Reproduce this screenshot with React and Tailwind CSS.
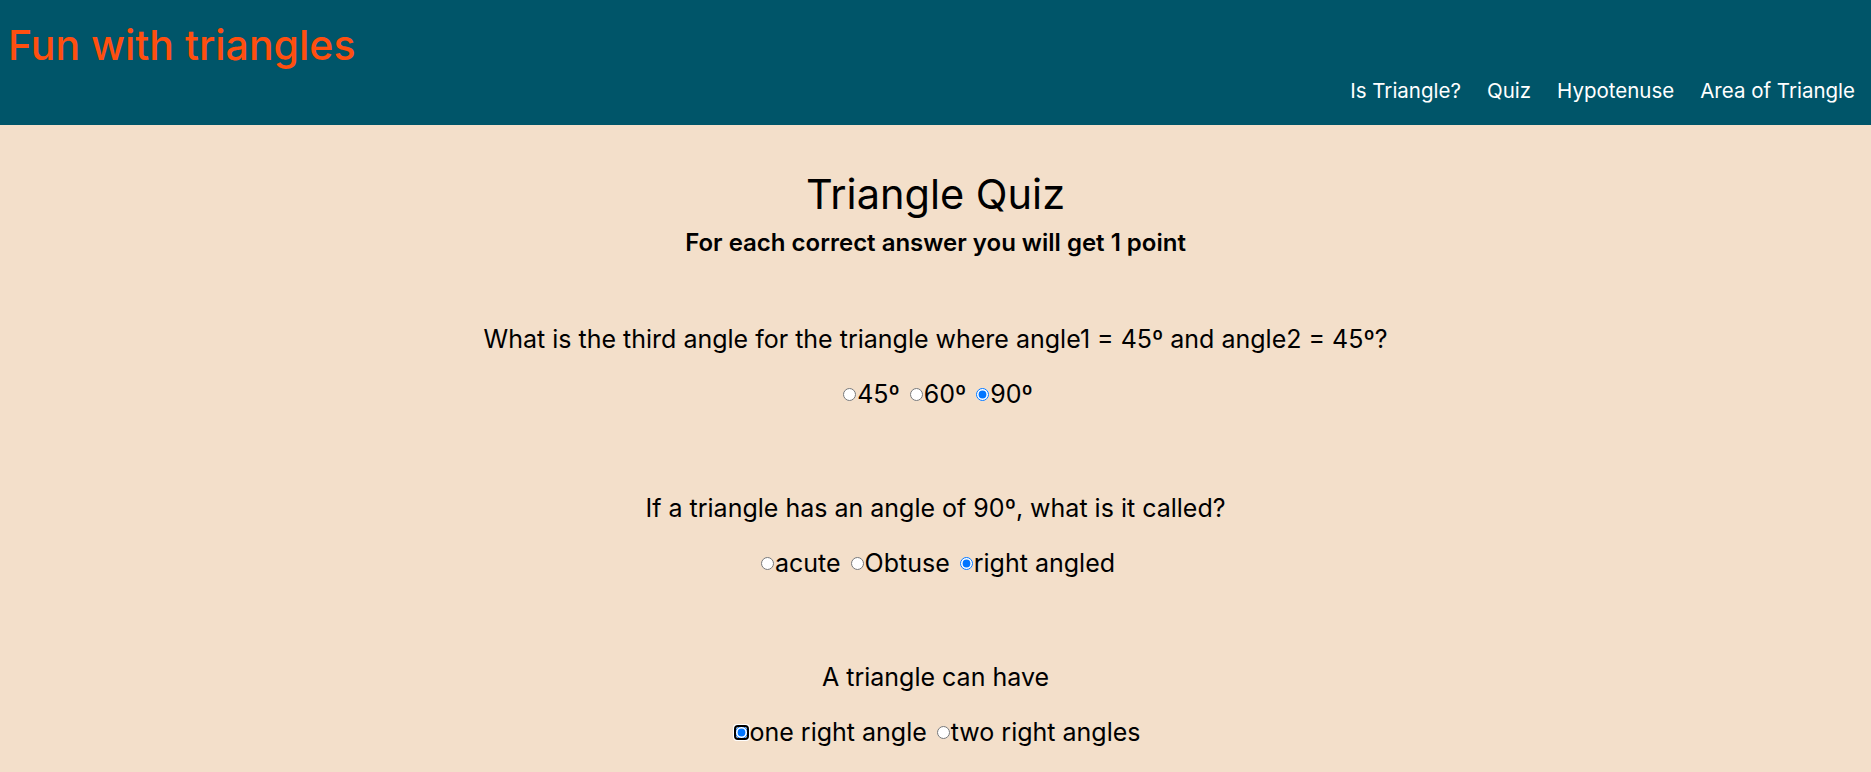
import { useState } from 'react';

const QUESTIONS = [
  {
    name: 'q1',
    text: 'What is the third angle for the triangle where angle1 = 45º and angle2 = 45º?',
    options: ['45º', '60º', '90º'],
    picked: 2,
  },
  {
    name: 'q2',
    text: 'If a triangle has an angle of 90º, what is it called?',
    options: ['acute', 'Obtuse', 'right angled'],
    picked: 2,
  },
  {
    name: 'q3',
    text: 'A triangle can have',
    options: ['one right angle', 'two right angles'],
    picked: 0,
    focused: 0,
  },
];

const Question = ({ q, first, answer, onPick }) => (
  <div className={first ? 'mt-[67px]' : 'mt-[84px]'}>
    <p className="text-[25px] leading-[30px]">{q.text}</p>
    <div className="mt-[25px] text-[25px] leading-[30px]">
      {q.options.map((opt, i) => (
        <label key={opt} className="mr-[5px] last:mr-0">
          <input
            type="radio"
            name={q.name}
            checked={answer === i}
            onChange={() => onPick(i)}
            className={`mt-[3px] mr-[1px] ml-[5px] mb-0 align-[2px] ${
              q.focused === i ? '[outline-style:auto] outline-offset-0 rounded-full' : ''
            }`}
          />
          {opt}
        </label>
      ))}
    </div>
  </div>
);

const App = () => {
  const [answers, setAnswers] = useState(QUESTIONS.map((q) => q.picked));

  return (
    <div className="min-h-screen bg-[#f3dfca] text-black font-['Inter','Open_Sans',sans-serif]">
      {/* Header */}
      <header className="h-[125px] bg-[#005569] flex justify-between pl-2 pr-4">
        <h1 className="pt-[24px] text-[41px] leading-[42px] font-medium text-[#ff4f0f]">
          Fun with triangles
        </h1>
        <nav className="self-end pb-[22px] flex gap-[26px] text-[20.5px] leading-[24px] text-white">
          <a href="#">Is Triangle?</a>
          <a href="#">Quiz</a>
          <a href="#">Hypotenuse</a>
          <a href="#">Area of Triangle</a>
        </nav>
      </header>

      {/* Quiz */}
      <main className="text-center pb-10">
        <h2 className="pt-[45px] text-[41.5px] leading-[48px]">Triangle Quiz</h2>
        <p className="mt-[11px] text-[24px] leading-[28px] font-semibold">
          For each correct answer you will get 1 point
        </p>
        {QUESTIONS.map((q, qi) => (
          <Question
            key={q.name}
            q={q}
            first={qi === 0}
            answer={answers[qi]}
            onPick={(i) => setAnswers((a) => a.map((v, j) => (j === qi ? i : v)))}
          />
        ))}
      </main>
    </div>
  );
};

export default App;
